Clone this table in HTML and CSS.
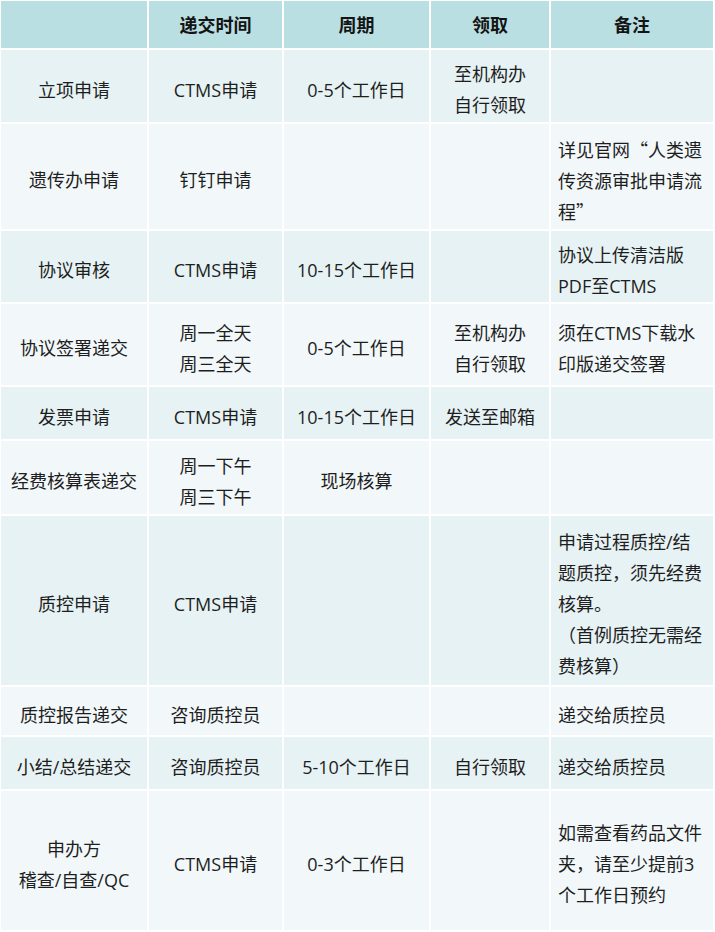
FILE: index.html
```html
<!DOCTYPE html>
<html lang="zh-CN">
<head>
<meta charset="utf-8">
<title>流程表</title>
<link rel="stylesheet" href="styles.css">
</head>
<body>
<table class="grid">
  <colgroup>
    <col class="c1"><col class="c2"><col class="c3"><col class="c4"><col class="c5">
  </colgroup>
  <thead>
    <tr class="head">
      <th></th><th>递交时间</th><th>周期</th><th>领取</th><th>备注</th>
    </tr>
  </thead>
  <tbody>
    <tr class="dark r1">
      <td>立项申请</td><td>CTMS申请</td><td>0-5个工作日</td><td>至机构办<br>自行领取</td><td class="note"></td>
    </tr>
    <tr class="light r2">
      <td>遗传办申请</td><td>钉钉申请</td><td></td><td></td><td class="note cjk">详见官网“人类遗传资源审批申请流程”</td>
    </tr>
    <tr class="dark r3">
      <td>协议审核</td><td>CTMS申请</td><td>10-15个工作日</td><td></td><td class="note">协议上传清洁版PDF至CTMS</td>
    </tr>
    <tr class="light r4">
      <td>协议签署递交</td><td>周一全天<br>周三全天</td><td>0-5个工作日</td><td>至机构办<br>自行领取</td><td class="note">须在CTMS下载水印版递交签署</td>
    </tr>
    <tr class="dark r5">
      <td>发票申请</td><td>CTMS申请</td><td>10-15个工作日</td><td>发送至邮箱</td><td class="note"></td>
    </tr>
    <tr class="light r6">
      <td>经费核算表递交</td><td>周一下午<br>周三下午</td><td>现场核算</td><td></td><td class="note"></td>
    </tr>
    <tr class="dark r7">
      <td>质控申请</td><td>CTMS申请</td><td></td><td></td><td class="note">申请过程质控/结题质控，须先经费核算。<br>（首例质控无需经费核算）</td>
    </tr>
    <tr class="light r8">
      <td>质控报告递交</td><td>咨询质控员</td><td></td><td></td><td class="note">递交给质控员</td>
    </tr>
    <tr class="dark r9">
      <td>小结/总结递交</td><td>咨询质控员</td><td>5-10个工作日</td><td>自行领取</td><td class="note">递交给质控员</td>
    </tr>
    <tr class="light r10">
      <td>申办方<br>稽查/自查/QC</td><td>CTMS申请</td><td>0-3个工作日</td><td></td><td class="note">如需查看药品文件夹，请至少提前3个工作日预约</td>
    </tr>
  </tbody>
</table>
</body>
</html>
```

FILE: styles.css
```css
html, body {
  margin: 0;
  padding: 0;
  background: #ffffff;
}

.grid {
  width: 716px;
  margin: -1px 0 0 -1px;
  border-collapse: separate;
  border-spacing: 2px;
  table-layout: fixed;
  font-family: "Open Sans", "Noto Sans CJK SC", sans-serif;
  font-size: 18px;
  line-height: 31px;
  color: #1e1e1e;
}

.c1 { width: 146px; }
.c2 { width: 133px; }
.c3 { width: 145px; }
.c4 { width: 118px; }
.c5 { width: 162px; }

th, td {
  padding: 0 7px;
  text-align: center;
  vertical-align: middle;
  box-sizing: border-box;
  overflow-wrap: anywhere;
}

td {
  padding-top: 8px;
}

td.note {
  text-align: left;
}

td.cjk {
  font-family: "Noto Sans CJK SC", sans-serif;
}

.head th {
  height: 47px;
  padding-top: 2px;
  background: #b9dfe3;
  font-weight: 700;
  color: #141414;
}

.dark td { background: #e6f2f4; }
.light td { background: #f2f8fa; }

.r1 td { height: 72px; }
.r2 td { height: 105px; }
.r3 td { height: 71px; }
.r4 td { height: 81px; }
.r5 td { height: 52px; }
.r6 td { height: 73px; }
.r7 td { height: 169px; }
.r8 td { height: 48px; }
.r9 td { height: 52px; }
.r10 td { height: 139px; }
```
